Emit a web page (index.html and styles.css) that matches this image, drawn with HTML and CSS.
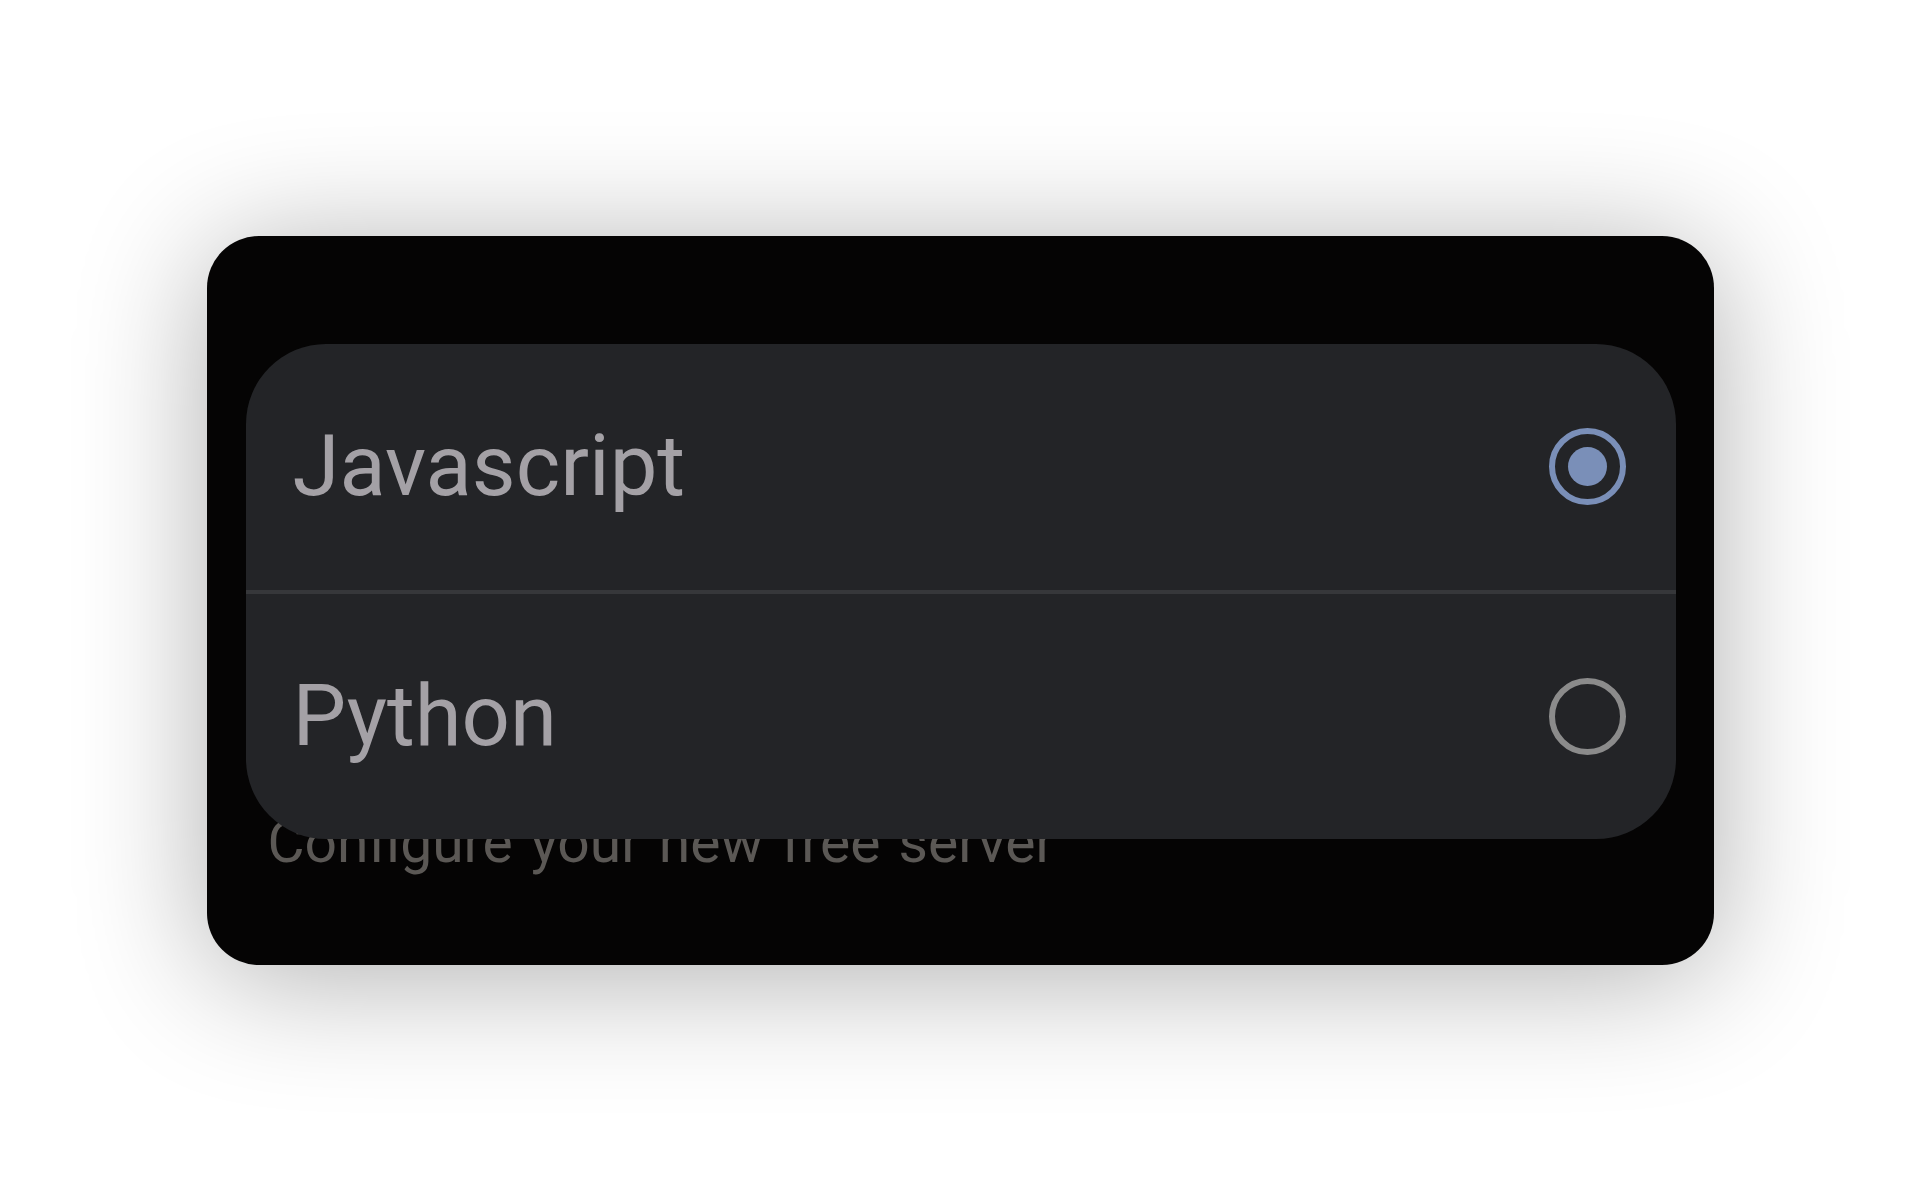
FILE: index.html
```html
<!DOCTYPE html>
<html lang="en">
<head>
<meta charset="utf-8">
<title>Language picker</title>
<link rel="stylesheet" href="styles.css">
</head>
<body>
  <div class="card">
    <p class="subtitle">Configure your new free server</p>
    <div class="menu" role="radiogroup">
      <div class="option">
        <span class="label">Javascript</span>
        <span class="radio radio-on"><span class="dot"></span></span>
      </div>
      <div class="divider"></div>
      <div class="option">
        <span class="label">Python</span>
        <span class="radio radio-off"></span>
      </div>
    </div>
  </div>
</body>
</html>
```

FILE: styles.css
```css
html, body {
  margin: 0;
  padding: 0;
}

body {
  width: 1920px;
  height: 1200px;
  background: #ffffff;
  display: flex;
  align-items: center;
  justify-content: center;
  font-family: Roboto, "Noto Sans", sans-serif;
}

.card {
  position: relative;
  box-sizing: border-box;
  width: 1507px;
  height: 729px;
  background: #050404;
  border-radius: 52px;
  box-shadow: 0 12px 130px rgba(0, 0, 0, 0.32);
  display: flex;
  flex-direction: column;
  justify-content: flex-end;
  padding: 0 0 94px 61px;
}

.subtitle {
  margin: 0;
  font-size: 57px;
  line-height: 56px;
  word-spacing: 4px;
  color: #5b5855;
  white-space: nowrap;
}

.menu {
  position: absolute;
  top: 108px;
  left: 39px;
  right: 38px;
  background: #232427;
  border-radius: 80px;
  display: flex;
  flex-direction: column;
}

.option {
  height: 246px;
  display: flex;
  align-items: center;
  justify-content: space-between;
  padding: 0 50px 0 47px;
}

.option + .divider + .option {
  height: 245px;
}

.divider {
  height: 4px;
  background: #36373a;
}

.label {
  font-size: 85px;
  line-height: 1;
  color: #a4a1a6;
}

.radio {
  box-sizing: border-box;
  width: 77px;
  height: 77px;
  border-radius: 50%;
  border: 6px solid #8b8b8b;
  display: flex;
  align-items: center;
  justify-content: center;
}

.radio-on {
  border-color: #7a8fb8;
}

.dot {
  width: 39px;
  height: 39px;
  border-radius: 50%;
  background: #7a8fb8;
}
```
